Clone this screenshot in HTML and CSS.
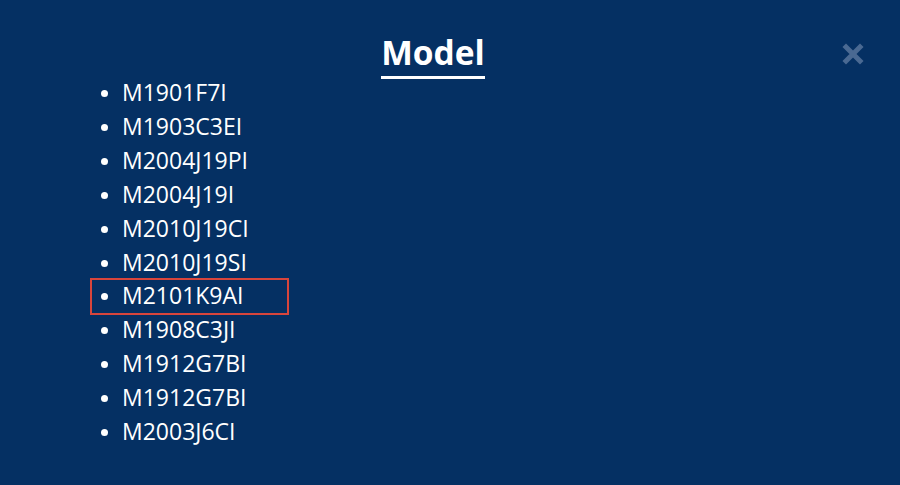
FILE: index.html
```html
<!DOCTYPE html>
<html>
<head>
<meta charset="utf-8">
<link rel="stylesheet" href="styles.css">
</head>
<body>
<div class="modal">
  <div class="header">
    <h1 class="title">Model</h1>
    <button class="close" aria-label="close">
      <svg width="22" height="22" viewBox="0 0 22 22"><path d="M4 4 L18 18 M18 4 L4 18" stroke="#4a6992" stroke-width="5" stroke-linecap="square"/></svg>
    </button>
  </div>
  <ul class="list">
    <li><span>M1901F7I</span></li>
    <li><span>M1903C3EI</span></li>
    <li><span>M2004J19PI</span></li>
    <li><span>M2004J19I</span></li>
    <li><span>M2010J19CI</span></li>
    <li><span>M2010J19SI</span></li>
    <li class="selected"><span>M2101K9AI</span></li>
    <li><span>M1908C3JI</span></li>
    <li><span>M1912G7BI</span></li>
    <li><span>M1912G7BI</span></li>
    <li><span>M2003J6CI</span></li>
  </ul>
</div>
</body>
</html>
```
FILE: styles.css
```css
html, body {
  margin: 0;
  padding: 0;
  background: #053063;
  width: 900px;
  height: 485px;
  overflow: hidden;
  font-family: "Open Sans", sans-serif;
  color: #ffffff;
}
.modal {
  padding-top: 30px;
}
.header {
  position: relative;
  display: flex;
  justify-content: center;
  padding-right: 34px;
}
.title {
  margin: 0;
  font-size: 33.5px;
  font-weight: 700;
  line-height: 44px;
  padding-bottom: 2px;
  border-bottom: 3px solid #ffffff;
}
.close {
  position: absolute;
  right: 36px;
  top: 13px;
  background: none;
  border: 0;
  padding: 0;
  width: 22px;
  height: 22px;
}
.close svg { display: block; }
.list {
  margin: -3px 0 0 0;
  padding: 0 0 0 122px;
  font-size: 23px;
  line-height: 33.9px;
}
.list li {
  padding: 0;
}
.list li::marker {
  font-size: 20px;
}
.list li.selected span {
  display: inline-block;
  position: relative;
}
.list li.selected span::before {
  content: "";
  position: absolute;
  left: -32px;
  top: -1px;
  width: 195px;
  height: 33px;
  border: 2px solid #d8453c;
}
```
